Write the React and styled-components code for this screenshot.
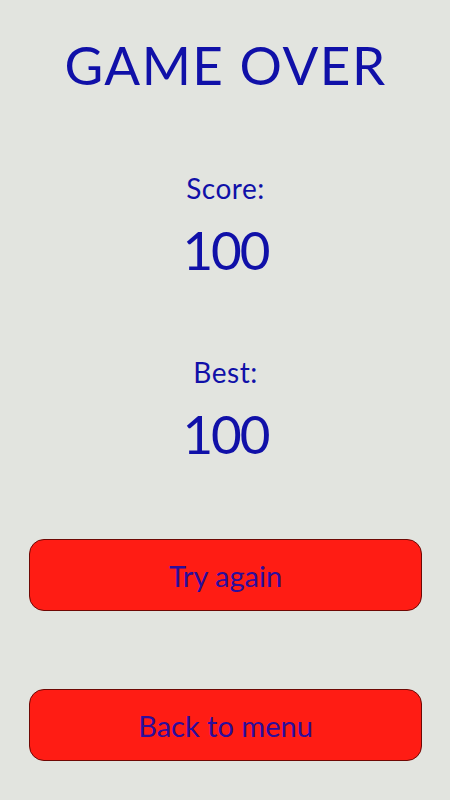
import React from "react";
import styled, { createGlobalStyle } from "styled-components";

const GlobalStyle = createGlobalStyle`
  html, body {
    margin: 0;
    padding: 0;
    background: #e2e4df;
  }
  body {
    font-family: Lato, "DejaVu Sans", sans-serif;
  }
`;

const Screen = styled.div`
  width: 450px;
  height: 800px;
  box-sizing: border-box;
  padding: 35px 28px 0 29px;
  display: flex;
  flex-direction: column;
  align-items: stretch;
  background: #e2e4df;
  color: #1010a8;
`;

const Title = styled.h1`
  margin: 0;
  font-size: 53px;
  font-weight: 400;
  line-height: 60px;
  letter-spacing: 1.5px;
  text-align: center;
`;

const Stat = styled.section`
  display: flex;
  flex-direction: column;
  align-items: center;
  margin-top: ${(p) => p.$gap}px;
`;

const Label = styled.div`
  font-size: 28px;
  line-height: 32px;
  letter-spacing: 0.5px;
`;

const Value = styled.div`
  margin-top: 16px;
  font-size: 53px;
  line-height: 60px;
  letter-spacing: -2px;
`;

const Button = styled.button`
  display: flex;
  align-items: center;
  justify-content: center;
  height: 72px;
  margin-top: ${(p) => p.$gap}px;
  border: 1.5px solid #6e0804;
  border-radius: 15px;
  background: #ff1c14;
  color: #2c0d9c;
  font-family: inherit;
  font-size: 29px;
  cursor: pointer;
`;

export default () => {
  return (
    <>
      <GlobalStyle />
      <Screen>
        <Title>GAME OVER</Title>
        <Stat $gap={77}>
          <Label>Score:</Label>
          <Value>100</Value>
        </Stat>
        <Stat $gap={76}>
          <Label>Best:</Label>
          <Value>100</Value>
        </Stat>
        <Button $gap={75}>Try again</Button>
        <Button $gap={78}>Back to menu</Button>
      </Screen>
    </>
  );
};
